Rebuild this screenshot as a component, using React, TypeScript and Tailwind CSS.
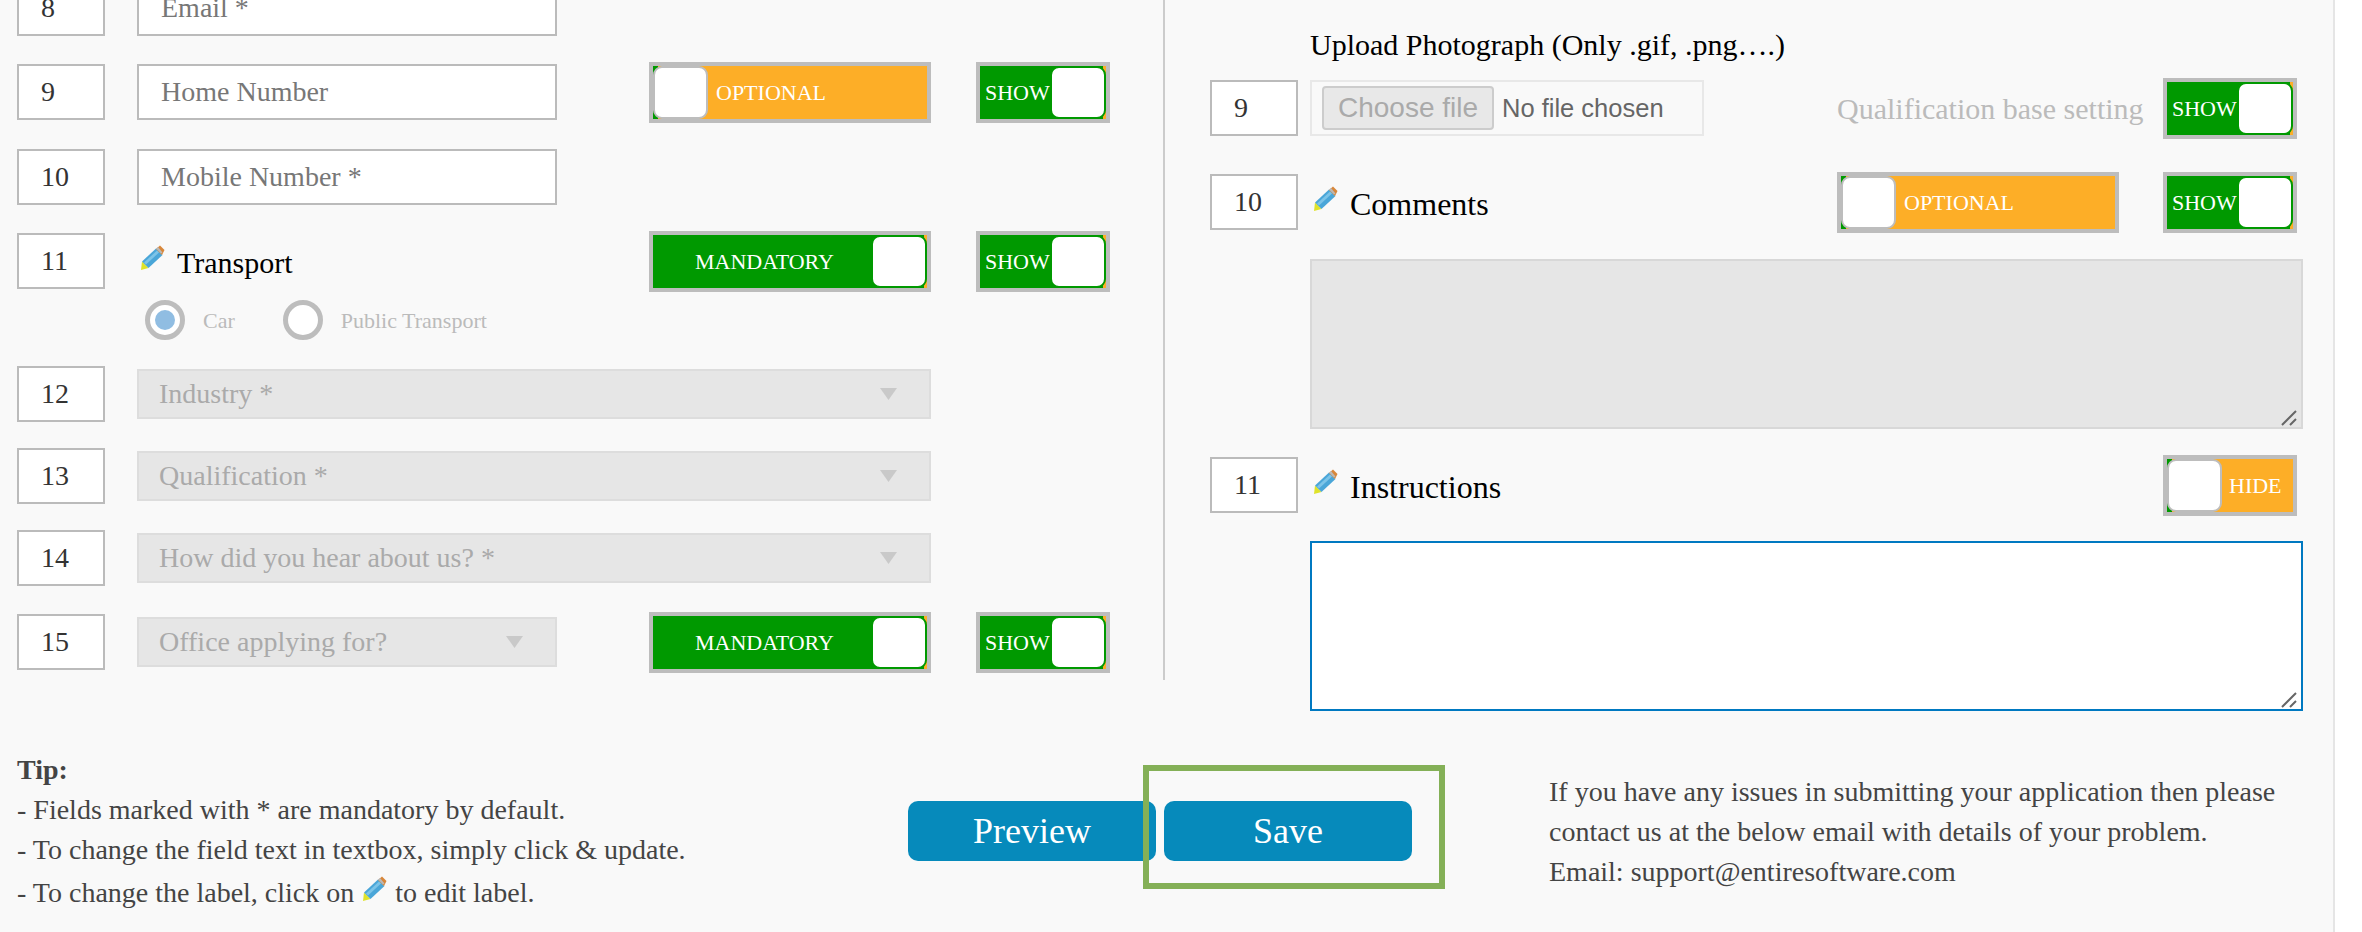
function Pencil({ className = '' }: { className?: string }) {
  return (
    <svg width="25" height="26" viewBox="0 0 25 26" className={className}>
      <polygon points="1,25 2,16.5 8.5,23" fill="#dfe32a" />
      <polygon points="2,16.5 16,3.5 22.5,10 8.5,23" fill="#4aa6d8" />
      <polygon points="4,17.5 17,5.5 19,7.5 6,19.5" fill="#7cc4e8" />
      <polygon points="16,4 20,0.5 24.5,5 22,10" fill="#d8873a" />
      <polygon points="16,3.5 18,2 22.5,7.5 21,8.5" fill="#b9b9b9" />
    </svg>
  );
}

function NumBox({ value }: { value: string }) {
  return (
    <input
      readOnly
      defaultValue={value}
      className="w-[88px] h-[56px] shrink-0 border-2 border-[#bbbbbb] bg-white pl-[22px] text-[28px] text-[#333333] outline-none"
    />
  );
}

function TextInput({ value }: { value: string }) {
  return (
    <input
      readOnly
      defaultValue={value}
      className="w-[420px] h-[56px] shrink-0 border-2 border-[#bbbbbb] bg-white pl-[22px] text-[28px] text-[#777777] outline-none"
    />
  );
}

function Toggle({ on, label, wide, textClass }: { on: boolean; label: string; wide?: boolean; textClass: string }) {
  return (
    <div className={`${wide ? 'w-[282px]' : 'w-[134px]'} h-[61px] shrink-0 border-4 border-[#bdbdbd]`}>
      <div className={`relative flex h-full items-center overflow-hidden text-[22px] leading-none text-white ${on ? 'bg-[#009900]' : 'bg-[#fdae27]'}`}>
        {on ? (
          <>
            <span className="absolute right-0 top-0 h-full w-[3px] bg-[#fdae27]" />
            <span className="absolute right-0 top-0 h-full w-[56px] rounded-[9px] border-2 border-[#009900] bg-white" />
          </>
        ) : (
          <>
            <span className="absolute left-0 top-0 h-full w-[5px] bg-[#009900]" />
            <span className="absolute left-0 top-0 h-full w-[55px] rounded-[9px] border-2 border-[#bdbdbd] bg-white" />
          </>
        )}
        <span className={`mt-[2px] ${textClass}`}>{label}</span>
      </div>
    </div>
  );
}

function Show() {
  return <Toggle on label="SHOW" textClass="pl-[5px]" />;
}

function Optional() {
  return <Toggle wide on={false} label="OPTIONAL" textClass="pl-[63px]" />;
}

function Mandatory() {
  return <Toggle wide on label="MANDATORY" textClass="pl-[42px]" />;
}

function Select({ label, wide }: { label: string; wide?: boolean }) {
  return (
    <div className={`${wide ? 'w-[794px]' : 'w-[420px]'} flex h-[50px] shrink-0 items-center justify-between border-2 border-[#dddddd] bg-[#e6e6e6] pl-[20px] pr-[32px] text-[28px] text-[#aaaaaa]`}>
      <span>{label}</span>
      <svg width="17" height="12" viewBox="0 0 17 12">
        <polygon points="0,0 17,0 8.5,12" fill="#c9c9c9" />
      </svg>
    </div>
  );
}

function Radio({ checked, label }: { checked?: boolean; label: string }) {
  return (
    <div className="flex items-center gap-[18px]">
      <span className="flex h-[40px] w-[40px] items-center justify-center rounded-full border-[5px] border-[#bdbdbd] bg-white">
        {checked && <span className="h-[20px] w-[20px] rounded-full bg-[#90bde2]" />}
      </span>
      <span className="text-[22px] text-[#bbbbbb]">{label}</span>
    </div>
  );
}

function EditLabel({ label, className }: { label: string; className: string }) {
  return (
    <div className={`${className} flex shrink-0 items-center text-black`}>
      <Pencil className="ml-[3px] mb-[7px]" />
      <span className="ml-[12px] mt-[3px]">{label}</span>
    </div>
  );
}

function TextArea({ className }: { className: string }) {
  return (
    <div className="relative ml-[100px] h-[170px] w-[993px]">
      <textarea className={`block h-full w-full resize-none border-2 outline-none ${className}`} />
      {/* resize grip */}
      <svg width="20" height="20" viewBox="0 0 20 20" className="absolute bottom-[2px] right-[2px]">
        <path d="M1 18 L15 4 M9 18 L15 12" stroke="#666666" strokeWidth="2" fill="none" />
      </svg>
    </div>
  );
}

export default function App() {
  return (
    <div className="relative h-[932px] w-[2362px] overflow-hidden bg-white font-['Liberation_Serif',serif]">
      <div className="h-full w-[2333px] border-r-2 border-[#e5e5e5] bg-[#f9f9f9] box-content">
        <div className="flex h-[680px]">
          {/* left column */}
          <div className="w-[1165px] shrink-0 border-r-2 border-[#cccccc] pl-[17px] pr-[50px]">
            <div className="-mt-[20px] flex items-center gap-[32px]">
              <NumBox value="8" />
              <TextInput value="Email *" />
            </div>
            <div className="mt-[28px] flex h-[56px] items-center">
              <NumBox value="9" />
              <div className="ml-[32px]"><TextInput value="Home Number" /></div>
              <div className="ml-[92px] flex gap-[45px]"><Optional /><Show /></div>
            </div>
            <div className="mt-[29px] flex items-center gap-[32px]">
              <NumBox value="10" />
              <TextInput value="Mobile Number *" />
            </div>
            <div className="mt-[28px] flex h-[56px] items-center">
              <NumBox value="11" />
              <EditLabel label="Transport" className="ml-[32px] w-[420px] text-[30px]" />
              <div className="ml-[92px] flex gap-[45px]"><Mandatory /><Show /></div>
            </div>
            <div className="mt-[11px] flex gap-[48px] pl-[128px]">
              <Radio checked label="Car" />
              <Radio label="Public Transport" />
            </div>
            <div className="mt-[26px] flex h-[56px] items-center gap-[32px]">
              <NumBox value="12" />
              <Select wide label="Industry *" />
            </div>
            <div className="mt-[26px] flex h-[56px] items-center gap-[32px]">
              <NumBox value="13" />
              <Select wide label="Qualification *" />
            </div>
            <div className="mt-[26px] flex h-[56px] items-center gap-[32px]">
              <NumBox value="14" />
              <Select wide label="How did you hear about us? *" />
            </div>
            <div className="mt-[28px] flex h-[56px] items-center">
              <NumBox value="15" />
              <div className="ml-[32px]"><Select label="Office applying for?" /></div>
              <div className="ml-[92px] flex gap-[45px]"><Mandatory /><Show /></div>
            </div>
          </div>

          {/* right column */}
          <div className="flex-1 pl-[45px]">
            <div className="mt-[25px] pl-[100px] text-[30px] leading-[40px] text-black">Upload Photograph (Only .gif, .png….)</div>
            <div className="mt-[15px] flex h-[56px] items-center">
              <NumBox value="9" />
              <div className="ml-[12px] flex h-[56px] w-[394px] items-center border-2 border-[#e8e8e8] bg-[#f9f9f9] pl-[10px] font-['Liberation_Sans',sans-serif]">
                <span className="flex h-[44px] w-[172px] items-center justify-center rounded-[4px] border-2 border-[#cccccc] bg-[#e8e8e8] text-[28px] text-[#aaaaaa]">Choose file</span>
                <span className="ml-[8px] text-[25.5px] text-[#666666]">No file chosen</span>
              </div>
              <div className="ml-[133px] w-[326px] text-[30px] text-[#bbbbbb]">Qualification base setting</div>
              <Show />
            </div>
            <div className="mt-[38px] mb-[29px] flex h-[56px] items-center">
              <NumBox value="10" />
              <EditLabel label="Comments" className="ml-[12px] w-[527px] text-[32px]" />
              <div className="flex gap-[44px]"><Optional /><Show /></div>
            </div>
            <TextArea className="border-[#d8d8d8] bg-[#e6e6e6]" />
            <div className="my-[28px] flex h-[56px] items-center">
              <NumBox value="11" />
              <EditLabel label="Instructions" className="ml-[12px] w-[853px] text-[32px]" />
              <Toggle on={false} label="HIDE" textClass="pl-[62px]" />
            </div>
            <TextArea className="border-[#0079c1] bg-white" />
          </div>
        </div>

        {/* footer */}
        <div className="flex text-[28px] leading-[40px] text-[#444444]">
          <div className="mt-[70px] w-[908px] shrink-0 pl-[17px]">
            <div className="font-bold">Tip:</div>
            <div>- Fields marked with * are mandatory by default.</div>
            <div>- To change the field text in textbox, simply click &amp; update.</div>
            <div className="mt-[3px] flex items-end whitespace-pre">
              - To change the label, click on <Pencil className="mb-[11px] mx-[1px]" /> to edit label.
            </div>
          </div>
          <button className="mt-[121px] h-[60px] w-[248px] rounded-[10px] bg-[#068abb] text-[36px] leading-none text-white">Preview</button>
          <button className="ml-[8px] mt-[121px] h-[60px] w-[248px] rounded-[10px] bg-[#068abb] text-[36px] leading-none text-white">Save</button>
          <div className="ml-[137px] mt-[92px] whitespace-nowrap">
            <div>If you have any issues in submitting your application then please</div>
            <div>contact us at the below email with details of your problem.</div>
            <div>Email: support@entiresoftware.com</div>
          </div>
        </div>
      </div>
      {/* highlight around Save */}
      <div className="absolute left-[1143px] top-[765px] h-[124px] w-[302px] border-[6px] border-[#84b057]" />
    </div>
  );
}
